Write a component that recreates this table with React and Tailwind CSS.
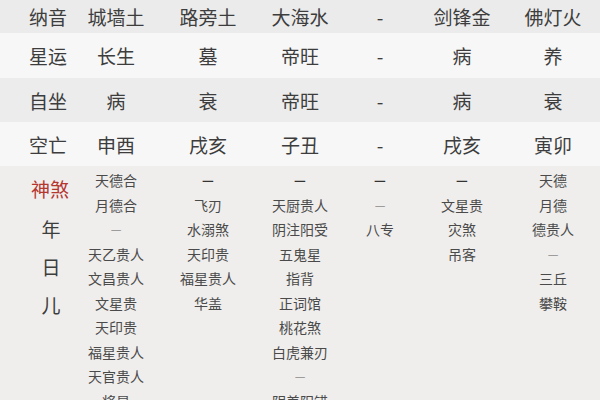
import React from "react";

const cols = "grid grid-cols-[82px_68px_116px_68px_92px_72px_102px]";

const topRows = [
  { label: "纳音", cells: ["城墙土", "路旁土", "大海水", "-", "剑锋金", "佛灯火"], bg: "bg-[#ebebeb]", h: "h-[33px]" },
  { label: "星运", cells: ["长生", "墓", "帝旺", "-", "病", "养"], bg: "bg-[#f7f7f7]", h: "h-[45px]" },
  { label: "自坐", cells: ["病", "衰", "帝旺", "-", "病", "衰"], bg: "bg-[#ececec]", h: "h-[44px]" },
  { label: "空亡", cells: ["申酉", "戌亥", "子丑", "-", "戌亥", "寅卯"], bg: "bg-[#f7f7f7]", h: "h-[44px]" },
];

// "=" marks a thick dash, "-" a thin one
const shensha = [
  ["天德合", "月德合", "-", "天乙贵人", "文昌贵人", "文星贵", "天印贵", "福星贵人", "天官贵人", "将星"],
  ["=", "飞刃", "水溺煞", "天印贵", "福星贵人", "华盖"],
  ["=", "天厨贵人", "阴注阳受", "五鬼星", "指背", "正词馆", "桃花煞", "白虎兼刃", "-", "阴差阳错"],
  ["=", "-", "八专"],
  ["=", "文星贵", "灾煞", "吊客"],
  ["天德", "月德", "德贵人", "-", "三丘", "攀鞍"],
];

function Cell({ t }) {
  if (t === "=") return <div className="h-[24.5px] text-[13px] font-bold text-[#333]">—</div>;
  if (t === "-") return <div className="h-[24.5px] text-[12px] text-[#8a8a8a]">—</div>;
  return <div>{t}</div>;
}

export default function App() {
  return (
    <div
      className="w-[600px] h-[400px] overflow-hidden bg-[#efeeec] text-[#3d3d3d]"
      style={{ fontFamily: '"Noto Sans CJK SC", "Noto Sans", sans-serif' }}
    >
      {/* TOP ROWS */}
      {topRows.map((row, i) => (
        <div key={i} className={`${cols} ${row.bg} ${row.h} items-center text-[19px] leading-none`}>
          <div className="pl-[29px]">{row.label}</div>
          {row.cells.map((c, j) => (
            <div key={j} className={`text-center ${j === 5 ? "pl-[8px]" : ""}`}>
              {c}
            </div>
          ))}
        </div>
      ))}

      {/* SHENSHA */}
      <div className={`${cols} pt-[2px]`}>
        <div className="flex flex-col items-center w-[100px]">
          <div className="text-[19px] leading-none text-[#b5352f] mt-[11px]">神煞</div>
          <div className="flex flex-col items-center text-[19px] leading-none gap-[19px] mt-[21px] ml-[2px]">
            <div>年</div>
            <div>日</div>
            <div>儿</div>
          </div>
        </div>
        {shensha.map((list, j) => (
          <div
            key={j}
            className={`flex flex-col items-center text-[14px] leading-[24.5px] text-[#4a4a4a] ${j === 5 ? "pl-[8px]" : ""}`}
          >
            {list.map((t, k) => (
              <Cell key={k} t={t} />
            ))}
          </div>
        ))}
      </div>
    </div>
  );
}
